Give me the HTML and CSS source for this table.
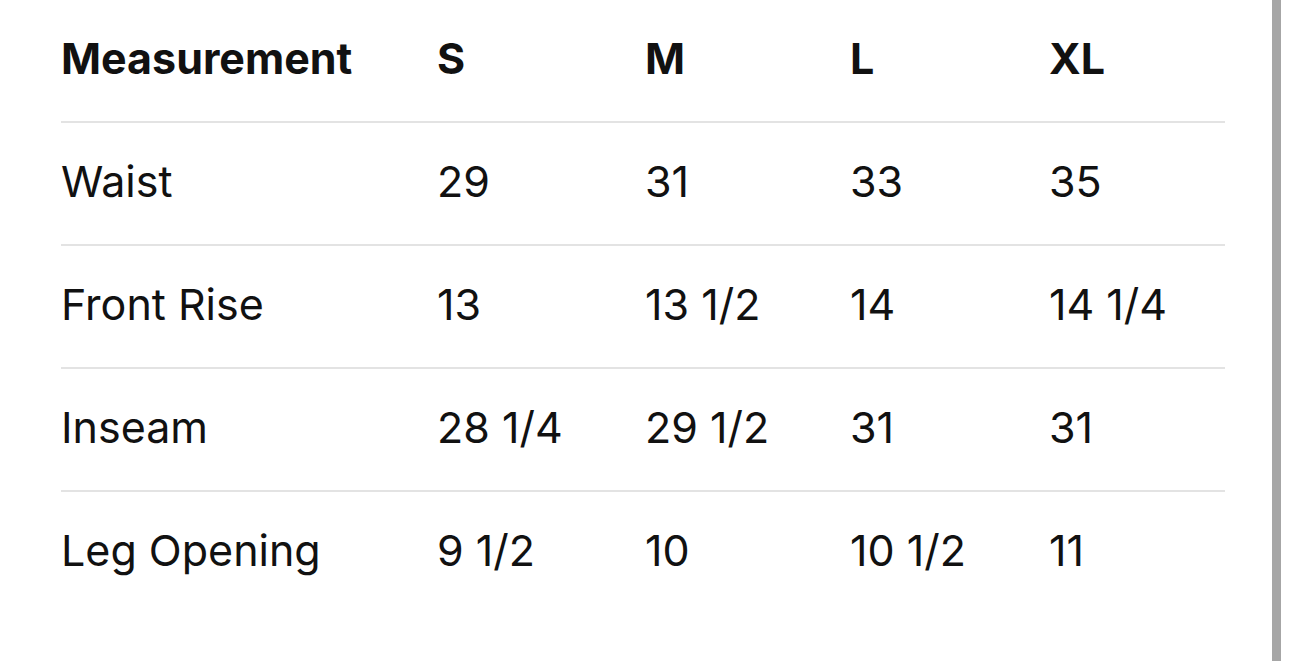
FILE: index.html
```html
<!DOCTYPE html>
<html lang="en">
<head>
<meta charset="utf-8">
<title>Size Chart</title>
<link rel="stylesheet" href="styles.css">
</head>
<body>
<div class="page">
  <div class="sheet">
    <div class="chart">
      <div class="row head">
        <div class="cell">Measurement</div>
        <div class="cell">S</div>
        <div class="cell">M</div>
        <div class="cell">L</div>
        <div class="cell">XL</div>
      </div>
      <div class="row">
        <div class="cell">Waist</div>
        <div class="cell">29</div>
        <div class="cell">31</div>
        <div class="cell">33</div>
        <div class="cell">35</div>
      </div>
      <div class="row">
        <div class="cell">Front Rise</div>
        <div class="cell">13</div>
        <div class="cell">13 1/2</div>
        <div class="cell">14</div>
        <div class="cell">14 1/4</div>
      </div>
      <div class="row">
        <div class="cell">Inseam</div>
        <div class="cell">28 1/4</div>
        <div class="cell">29 1/2</div>
        <div class="cell">31</div>
        <div class="cell">31</div>
      </div>
      <div class="row last">
        <div class="cell">Leg Opening</div>
        <div class="cell">9 1/2</div>
        <div class="cell">10</div>
        <div class="cell">10 1/2</div>
        <div class="cell">11</div>
      </div>
    </div>
  </div>
  <div class="edge"></div>
</div>
</body>
</html>
```

FILE: styles.css
```css
html, body {
  margin: 0;
  padding: 0;
  background: #ffffff;
}

body {
  font-family: Inter, "Noto Sans", "Liberation Sans", sans-serif;
  color: #111111;
  overflow: hidden;
}

.page {
  display: flex;
  width: 1290px;
  height: 661px;
}

.sheet {
  width: 1272px;
  padding-left: 61px;
  box-sizing: border-box;
}

.edge {
  width: 9px;
  height: 100%;
  background: #a6a6a6;
}

.chart {
  width: 1164px;
}

.row {
  display: grid;
  grid-template-columns: 376px 208px 205px 199px 176px;
  height: 121px;
  border-bottom: 2px solid #e3e3e3;
  align-items: start;
}

.row.last {
  border-bottom: none;
}

.cell {
  font-size: 43px;
  line-height: 52px;
  padding-top: 32px;
  white-space: nowrap;
  font-weight: 400;
}

.head .cell {
  font-weight: 700;
}
```
